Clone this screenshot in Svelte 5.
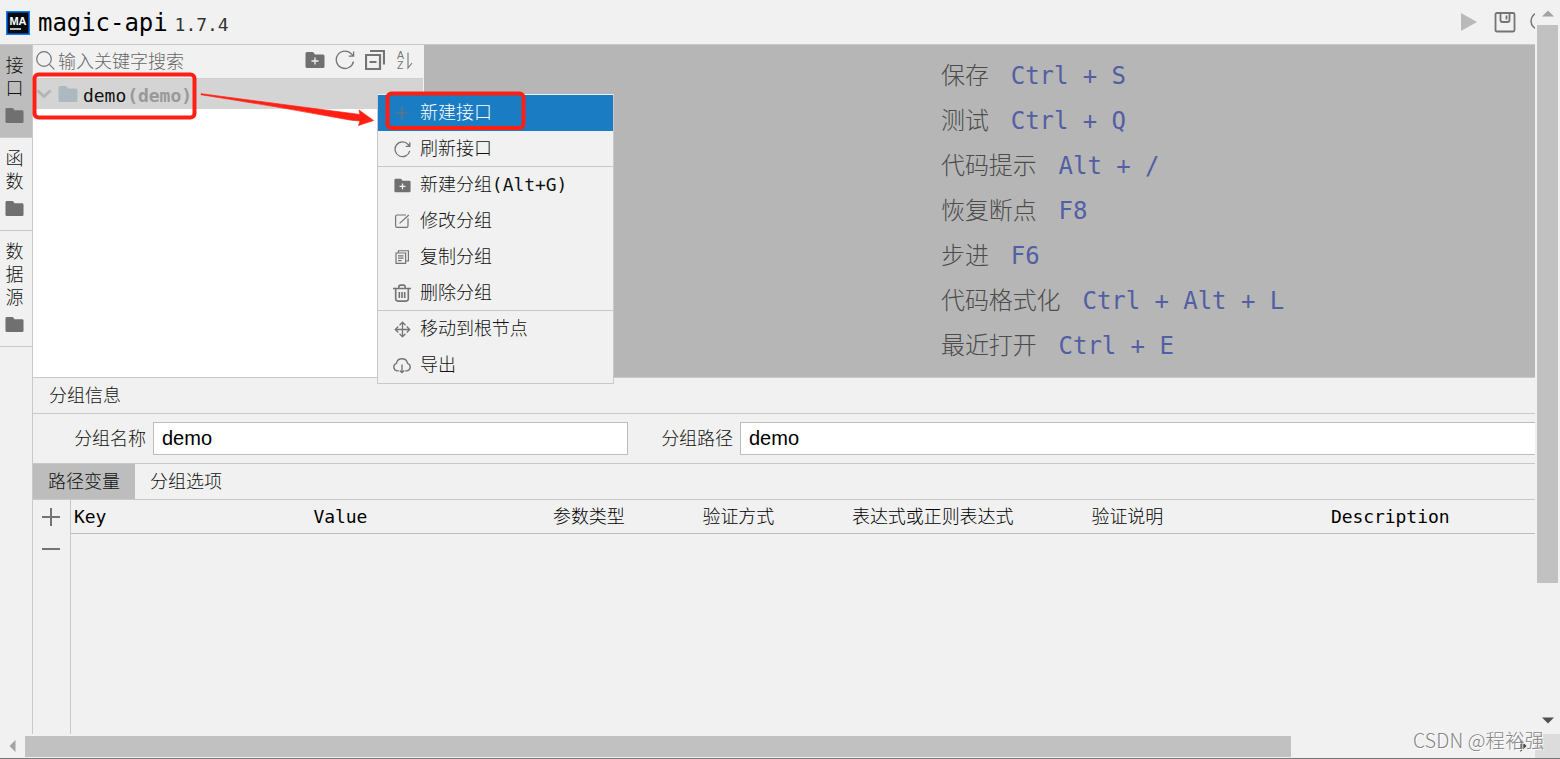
<script>
	const sideTabs = [
		{ chars: ["接", "口"], active: true },
		{ chars: ["函", "数"], active: false },
		{ chars: ["数", "据", "源"], active: false }
	];

	const shortcuts = [
		["保存", "Ctrl + S"],
		["测试", "Ctrl + Q"],
		["代码提示", "Alt + /"],
		["恢复断点", "F8"],
		["步进", "F6"],
		["代码格式化", "Ctrl + Alt + L"],
		["最近打开", "Ctrl + E"]
	];

	const menu = [
		{ icon: "plus", label: "新建接口", selected: true },
		{ icon: "refresh", label: "刷新接口", divided: true },
		{ icon: "folderAdd", label: "新建分组(Alt+G)" },
		{ icon: "edit", label: "修改分组" },
		{ icon: "copy", label: "复制分组" },
		{ icon: "trash", label: "删除分组", divided: true },
		{ icon: "move", label: "移动到根节点" },
		{ icon: "cloud", label: "导出" }
	];

	const columns = ["Key", "Value", "参数类型", "验证方式", "表达式或正则表达式", "验证说明", "Description"];
</script>

{#snippet icon(name)}
	<svg class="icon" viewBox="0 0 20 20">
		{#if name === "folder" || name === "folderAdd"}
			<path class="solid" d="M.5 3.500q0-1.500 1.500-1.500h5.500q.8 0 1.300.7L10 4.500h8q1.500 0 1.500 1.500v10.500q0 1.500-1.500 1.500H2q-1.500 0-1.500-1.500z" />
			{#if name === "folderAdd"}
				<path class="knockout" d="M10 7.500v7M6.500 11h7" />
			{/if}
		{:else if name === "plus"}
			<path d="M10 1.500v17M1.500 10h17" />
		{:else if name === "refresh"}
			<path d="M18.500 11.500A8.700 8.700 0 1 1 16.700 4.200L18.500 6M18.600 1.500V6.200H13.800" />
		{:else if name === "edit"}
			<path d="M15 2.500H4Q2 2.500 2 4.500v11.500q0 2 2 2h11.500q2 0 2-2V6.500M7 13L18.500 2.500" />
		{:else if name === "copy"}
			<path d="M5.500 5V2.200h12.500V15H15M2.500 5h12v13h-12zM5 8.500h7M5 11.500h7M5 14.500h4.500" />
		{:else if name === "trash"}
			<path class="thick" d="M0 5h20M6.500 4.500V3.500Q6.500 1.200 8.500 1.200h3q2 0 2 2.300v1M3 5.500v11Q3 19 5.500 19h9q2.500 0 2.500-2.500v-11M7 9v6.500M10 9v6.500M13 9v6.500" />
		{:else if name === "move"}
			<path d="M10 1.500v17M1.500 10h17M6.500 5L10 1.500 13.500 5M6.500 15l3.500 3.500 3.500-3.500M5 6.500L1.500 10 5 13.500M15 6.500l3.500 3.500-3.500 3.500" />
		{:else if name === "cloud"}
			<path d="M6.500 16.500H4.500a4.300 4.300 0 0 1-.7-8.300 6.300 6.300 0 0 1 12.400 0 4.300 4.300 0 0 1-.7 8.300H13.500M10 9.500v9M7.500 16l2.500 2.500 2.500-2.500" />
		{/if}
	</svg>
{/snippet}

<div class="window">
	<div class="workspace">
		<div class="page">
			<header>
				<svg class="logo" viewBox="0 0 24 24">
					<rect width="24" height="24" fill="#087cfa" />
					<rect x="1.500" y="1.500" width="21" height="21" fill="#070b10" />
					<text x="3.500" y="13.500">MA</text>
					<rect x="4" y="17" width="11" height="2" fill="#bbb" />
				</svg>
				<span class="title">magic-api</span>
				<span class="version">1.7.4</span>
				<div class="actions">
					<svg width="18" height="20" viewBox="0 0 18 20"><path d="M1 1v18l16-9z" fill="#b9b9b9" /></svg>
					<svg class="save" width="22" height="22" viewBox="0 0 22 22"><path d="M3 2h16q1.500 0 1.500 1.500V19q0 1.500-1.500 1.500H3q-1.500 0-1.500-1.500V3.500Q1.500 2 3 2zM6.500 2v7q0 2 2 2h5q2 0 2-2V2M12.500 4.500v4" /></svg>
					<svg width="20" height="22" viewBox="0 0 20 22"><circle cx="9.500" cy="10" r="8.500" /></svg>
				</div>
			</header>

			<div class="main">
				<nav>
					{#each sideTabs as tab}
						<div class="side-tab" class:active={tab.active}>
							{#each tab.chars as char}
								<span>{char}</span>
							{/each}
							{@render icon("folder")}
						</div>
					{/each}
				</nav>

				<div class="content">
					<div class="upper">
						<aside>
							<div class="search">
								<svg width="20" height="20" viewBox="0 0 20 20"><circle cx="8" cy="8" r="7.300" /><path d="M13.300 13.300l5 5" /></svg>
								<span class="placeholder">输入关键字搜索</span>
								<div class="tools">
									{@render icon("folderAdd")}
									{@render icon("refresh")}
									<svg viewBox="0 0 20 20"><path class="heavy" d="M1 5h14v14H1zM4.500 12h7M5 1h14v13.500" /></svg>
									<svg class="sort" viewBox="0 0 20 20">
										<text x="2" y="8.500">A</text>
										<text x="2" y="18.500">Z</text>
										<path d="M13 2.500v15.500l4-5" />
									</svg>
								</div>
							</div>
							<div class="tree-row">
								<svg width="16" height="10" viewBox="0 0 16 10"><path d="M1.500 1.500L8 7.500l6.500-6" stroke="#b5b5b5" stroke-width="3" /></svg>
								<span class="tree-folder">{@render icon("folder")}</span>
								<span>demo</span><b>(demo)</b>
							</div>
						</aside>
						<section class="editor">
							{#each shortcuts as [name, keys]}
								<div class="shortcut"><span>{name}</span><em>{keys}</em></div>
							{/each}
						</section>
					</div>

					<div class="info-title">分组信息</div>
					<div class="form">
						<label for="name">分组名称</label>
						<input id="name" value="demo" />
						<label for="path">分组路径</label>
						<input id="path" class="wide" value="demo" />
					</div>
					<div class="tabs">
						<div class="tab active">路径变量</div>
						<div class="tab">分组选项</div>
					</div>
					<div class="params">
						<div class="param-tools">
							<svg width="20" height="20" viewBox="0 0 20 20"><path d="M10 1v18M1 10h18" /></svg>
							<svg width="20" height="20" viewBox="0 0 20 20"><path d="M1 10h18" /></svg>
						</div>
						<div class="table-head">
							{#each columns as column}
								<span>{column}</span>
							{/each}
						</div>
					</div>
				</div>
			</div>
		</div>

		<div class="scroll vertical">
			<svg width="12" height="7" viewBox="0 0 12 7"><path d="M0 6.500L6 .5l6 6z" fill="#a3a3a3" /></svg>
			<div class="thumb"></div>
			<svg class="end" width="12" height="7" viewBox="0 0 12 7"><path d="M0 .5h12l-6 6z" fill="#505050" /></svg>
		</div>
	</div>

	<div class="scroll horizontal">
		<svg width="7" height="12" viewBox="0 0 7 12"><path d="M6.500 0v12l-6-6z" fill="#a3a3a3" /></svg>
		<div class="thumb"></div>
		<svg class="end" width="7" height="12" viewBox="0 0 7 12"><path d="M.5 0v12l6-6z" fill="#404040" /></svg>
		<div class="corner"></div>
	</div>

	<div class="menu">
		{#each menu as item}
			<div class="menu-item" class:selected={item.selected} class:divided={item.divided}>
				<span class="menu-icon {item.icon}">{@render icon(item.icon)}</span>
				<span>{item.label}</span>
			</div>
		{/each}
	</div>

	<svg class="marks" viewBox="0 0 1560 759">
		<rect x="34.500" y="74.500" width="160" height="43" rx="4" />
		<rect x="387.500" y="93.500" width="136" height="34.500" rx="4" />
		<path d="M201 93.700L360 114.500l-1-4.500 14.500 10.500-15 5 1.500-4.500-10-1Q275 106 201 94.700z" />
	</svg>
	<div class="watermark">CSDN @程裕强</div>
</div>

<style>
	:global(body) {
		overflow: hidden;
	}
	.window {
		position: relative;
		display: flex;
		flex-direction: column;
		width: 1560px;
		height: 759px;
		box-sizing: border-box;
		border-bottom: 1px solid #777;
		overflow: hidden;
		background: #f1f1f1;
		color: #111;
		font: 300 18px/24px "DejaVu Sans Mono", "Noto Sans CJK SC", monospace;
		letter-spacing: -0.04px;
	}
	svg {
		display: block;
		flex: none;
		fill: none;
		stroke: #747474;
		stroke-width: 1.5;
	}
	.workspace {
		display: flex;
		height: 734px;
	}
	.page {
		display: flex;
		flex-direction: column;
		width: 1535px;
		overflow: hidden;
	}
	header {
		display: flex;
		align-items: center;
		box-sizing: border-box;
		height: 45px;
		padding-left: 6px;
		border-bottom: 1px solid #c9c9c9;
	}
	.logo {
		width: 24px;
		height: 24px;
		margin-top: 2px;
		stroke: none;
	}
	.logo text {
		fill: #fff;
		font: bold 11px "Liberation Sans", sans-serif;
	}
	.title {
		margin: 1px 0 0 8px;
		font-size: 24px;
		letter-spacing: -0.05px;
		color: #000;
	}
	.version {
		margin: 5px 0 0 7px;
		color: #333;
	}
	.actions {
		display: flex;
		align-items: center;
		gap: 16px;
		margin: 0 -15px 0 auto;
	}
	.actions svg:first-child {
		stroke: none;
	}
	.actions .save {
		stroke-width: 1.8;
	}
	.actions svg:last-child {
		margin-left: -2px;
	}
	.main {
		display: flex;
		flex: 1;
		min-height: 0;
	}
	nav {
		width: 32px;
		flex: none;
		border-right: 1px solid #c9c9c9;
	}
	.side-tab {
		display: flex;
		flex-direction: column;
		align-items: center;
		box-sizing: border-box;
		padding: 9px 3px 12px 0;
		border-bottom: 1px solid #c9c9c9;
		line-height: 23px;
	}
	.side-tab.active {
		background: #bdbdbd;
	}
	.side-tab :global(.icon) {
		width: 19px;
		height: 19px;
		margin-top: 6px;
	}
	.solid {
		fill: #707070;
		stroke: none;
	}
	.knockout {
		stroke: #f1f1f1;
	}
	.content {
		display: flex;
		flex-direction: column;
		flex: 1;
		min-width: 0;
	}
	.upper {
		display: flex;
		height: 332px;
	}
	aside {
		width: 390px;
		flex: none;
		background: #fff;
		border-right: 1px solid #f1f1f1;
	}
	.search {
		display: flex;
		align-items: center;
		box-sizing: border-box;
		height: 34px;
		padding: 0 8px 2px 3px;
		background: #f1f1f1;
		border-bottom: 1px solid #cfcfcf;
	}
	.placeholder {
		margin-left: 2px;
		padding-top: 2px;
		letter-spacing: 0;
		color: #666;
	}
	.search > svg {
		stroke-width: 1.2;
	}
	.tools {
		display: flex;
		gap: 10px;
		margin: -1px 0 0 auto;
	}
	.tools svg {
		width: 20px;
		height: 20px;
		stroke-width: 1.3;
	}
	.tools .heavy {
		stroke-width: 2.2;
	}
	.tools .sort {
		stroke: #808080;
		stroke-width: 1.2;
	}
	.sort text {
		fill: #777;
		stroke: none;
		font: 400 10.5px "Liberation Sans", sans-serif;
	}
	.tree-row {
		display: flex;
		align-items: center;
		height: 30px;
		padding: 0 0 0 3px;
		background: #d4d4d4;
	}
	.tree-row > span,
	.tree-row > b {
		padding-top: 3px;
	}
	.tree-row > .tree-folder {
		margin: 0 5px 0 6px;
		padding: 0;
	}
	.tree-folder svg {
		width: 20px;
		height: 20px;
	}
	.tree-folder .solid {
		fill: #adb9c1;
	}
	.tree-row b {
		margin-left: 1px;
		font-weight: 700;
		color: #999;
	}
	.editor {
		flex: 1;
		padding: 9px 0 0 517px;
		box-sizing: border-box;
		background: #b6b6b6;
	}
	.shortcut {
		display: flex;
		gap: 22px;
		height: 45px;
		font-size: 24px;
		line-height: 45px;
		color: #4c4c4c;
		white-space: pre;
	}
	.shortcut span {
		letter-spacing: -0.1px;
	}
	.shortcut em {
		font-style: normal;
		letter-spacing: -0.05px;
		color: #525fa3;
	}
	.info-title {
		box-sizing: border-box;
		height: 37px;
		padding-left: 16px;
		border: solid #c9c9c9;
		border-width: 1px 0;
		line-height: 35px;
	}
	.form {
		display: flex;
		align-items: center;
		height: 49px;
	}
	.form label {
		width: 113px;
		flex: none;
		text-align: right;
	}
	.form label + input {
		margin-left: 7px;
	}
	.form input {
		width: 475px;
		height: 33px;
		flex: none;
		box-sizing: border-box;
		padding: 0 8px;
		border: 1px solid #bdbdbd;
		background: #fff;
		color: #000;
		font: 20px "Liberation Sans", Arial, sans-serif;
	}
	.form label:nth-of-type(2) {
		width: 105px;
	}
	.form input.wide {
		width: 900px;
	}
	.tabs {
		display: flex;
		box-sizing: border-box;
		height: 37px;
		border: solid #c9c9c9;
		border-width: 1px 0;
	}
	.tab {
		padding: 0 15px;
		line-height: 35px;
	}
	.tab.active {
		width: 72px;
		background: #bdbdbd;
	}
	.params {
		display: flex;
		flex: 1;
	}
	.param-tools {
		display: flex;
		flex-direction: column;
		align-items: center;
		gap: 12px;
		box-sizing: border-box;
		width: 38px;
		padding: 7px 1px 0 0;
		border-right: 1px solid #c9c9c9;
	}
	.param-tools svg {
		stroke-width: 2;
	}
	.table-head {
		display: grid;
		grid-template-columns: 239.5px 239.5px 149.5px 149.5px 239.5px 239.5px 1fr;
		flex: 1;
		height: 33px;
		padding-left: 3px;
		border-bottom: 1px solid #bdbdbd;
		line-height: 34px;
		letter-spacing: -0.07px;
		color: #000;
		white-space: nowrap;
	}
	.scroll {
		display: flex;
		align-items: center;
		box-sizing: border-box;
		background: #f1f1f1;
	}
	.scroll svg {
		stroke: none;
	}
	.thumb {
		background: #c1c1c1;
	}
	.vertical {
		flex-direction: column;
		width: 25px;
		padding: 10px 0;
	}
	.vertical .thumb {
		width: 21px;
		height: 558px;
		margin-top: 8px;
	}
	.vertical .end {
		margin-top: auto;
	}
	.horizontal {
		height: 24px;
		padding-left: 9px;
	}
	.horizontal .thumb {
		width: 1266px;
		height: 21px;
		margin-left: 9px;
	}
	.horizontal .end {
		margin-left: auto;
	}
	.corner {
		width: 25px;
		height: 24px;
		margin-left: 8px;
		background: #dcdcdc;
	}
	.menu {
		position: absolute;
		left: 377px;
		top: 94px;
		width: 235px;
		border: 1px solid #c9c9c9;
		border-top-color: #f1f1f1;
		background: #f1f1f1;
	}
	.menu-item {
		display: flex;
		align-items: center;
		box-sizing: border-box;
		height: 36px;
		padding-left: 15px;
		border-bottom: 1px solid transparent;
	}
	.menu-item.divided {
		border-bottom-color: #c9c9c9;
	}
	.menu-item.selected {
		background: #1a7cc3;
		color: #fff;
	}
	.menu-icon {
		display: flex;
		justify-content: center;
		width: 18px;
		margin: 1px 9px 0 0;
	}
	.menu-icon svg {
		width: 17px;
		height: 17px;
	}
	.menu-icon.edit svg,
	.menu-icon.copy svg,
	.menu-icon.plus svg {
		width: 16px;
		height: 16px;
	}
	.menu-icon.trash svg,
	.menu-icon.cloud svg {
		width: 18px;
		height: 18px;
	}
	.thick {
		stroke-width: 1.8;
	}
	.marks {
		position: absolute;
		left: 0;
		top: 0;
		width: 1560px;
		height: 759px;
		stroke: #ff2013;
		stroke-width: 4;
		pointer-events: none;
	}
	.marks path {
		fill: #ff2013;
		stroke-width: 0.7;
	}
	.watermark {
		position: absolute;
		left: 1413px;
		top: 727px;
		color: #858585;
		font: 300 19.5px/25px "Noto Sans CJK SC", sans-serif;
		letter-spacing: 0.1px;
		text-shadow: 1px 1px 0 #fff;
		white-space: nowrap;
	}
</style>
